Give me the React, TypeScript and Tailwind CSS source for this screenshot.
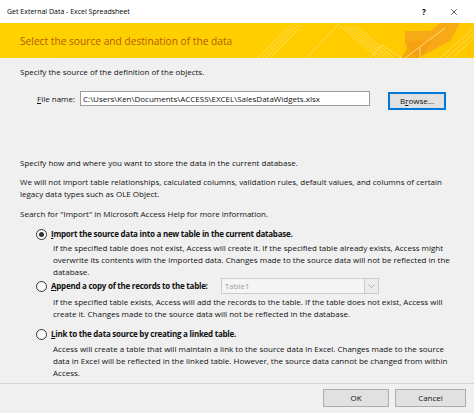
import { X } from 'lucide-react';

function Radio({ checked }: { checked?: boolean }) {
  return (
    <span className="flex h-[11px] w-[11px] shrink-0 items-center justify-center rounded-full border border-[#333] bg-white">
      {checked && <span className="h-[5px] w-[5px] rounded-full bg-[#333]" />}
    </span>
  );
}

function BannerArt() {
  // decorative stripes on the right side of the yellow header
  return (
    <svg className="absolute inset-0 h-full w-full" viewBox="0 0 474 35" preserveAspectRatio="none">
      <defs>
        <linearGradient id="bg" x1="0" x2="1" y1="0" y2="0">
          <stop offset="0" stopColor="#ffd200" />
          <stop offset="0.6" stopColor="#ffce00" />
          <stop offset="1" stopColor="#ffc800" />
        </linearGradient>
      </defs>
      <rect width="474" height="35" fill="url(#bg)" />
      <g stroke="#ffe9a0" strokeWidth="0.7" fill="none" opacity="0.8">
        <path d="M258 35 L290 2" />
        <path d="M262 35 L294 2" />
        <path d="M266 35 L298 2" />
        <path d="M270 35 L302 2" />
        <path d="M306 35 L340 0" />
        <path d="M340 3 L378 35" />
        <path d="M344 3 L382 35" />
        <path d="M348 3 L386 35" />
        <path d="M352 3 L390 35" />
        <path d="M356 3 L394 35" />
        <path d="M370 35 L382 22 L402 35" />
        <path d="M440 35 L474 5" />
        <path d="M446 35 L474 10" />
        <path d="M452 35 L474 15" />
      </g>
      <polygon points="405,8 430,8 440,0 460,0 450,18 418,35 405,22" fill="#f7a51a" opacity="0.85" />
      <polygon points="410,18 432,18 420,35 402,35" fill="#f39a10" opacity="0.7" />
      <path d="M405 35 L445 5" stroke="#ffe9a0" strokeWidth="0.8" />
      <path d="M420 25 L420 35" stroke="#ffe9a0" strokeWidth="0.8" />
    </svg>
  );
}

export default function App() {
  return (
    <div
      className="flex h-[413px] w-[474px] flex-col overflow-hidden bg-[#f0f0f0] text-[8px] leading-[12px] text-[#111]"
      style={{ fontFamily: '"Open Sans", "Noto Sans", sans-serif' }}
    >
      {/* Title bar */}
      <div className="flex h-[23px] shrink-0 items-center bg-white pl-[7px] text-[7px] text-black">
        <span className="flex-1">Get External Data - Excel Spreadsheet</span>
        <span className="w-[20px] text-center text-[8px] font-bold">?</span>
        <span className="flex w-[40px] items-center justify-center">
          <X className="h-[10px] w-[10px]" strokeWidth={1.5} />
        </span>
      </div>

      {/* Yellow banner */}
      <div className="relative flex h-[35px] shrink-0 items-center pl-[20px]">
        <BannerArt />
        <span className="relative text-[10.2px] text-[#b65a00]">Select the source and destination of the data</span>
      </div>

      {/* Body */}
      <div className="flex flex-1 flex-col pl-[20px] pr-[18px] pt-[8px]">
        <p>Specify the source of the definition of the objects.</p>

        <div className="mt-[13px] flex items-start pl-[17px]">
          <span className="w-[43px] leading-[15px]">
            <span className="underline">F</span>ile name:
          </span>
          <div className="flex h-[15px] w-[290px] items-center border border-[#9c9c9c] bg-white px-[2px]">
            C:\Users\Ken\Documents\ACCESS\EXCEL\SalesDataWidgets.xlsx
          </div>
          <button className="ml-[18px] mt-[1px] flex h-[18px] w-[58px] items-center justify-center border border-[#0078d7] bg-[#e1e1e1] shadow-[inset_0_0_0_1px_#0078d7]">
            B<span className="underline">r</span>owse...
          </button>
        </div>

        <p className="mt-[47px]">Specify how and where you want to store the data in the current database.</p>
        <p className="mt-[7px]">
          We will not import table relationships, calculated columns, validation rules, default values, and columns of certain legacy data types such as OLE Object.
        </p>
        <p className="mt-[8px]">Search for "Import" in Microsoft Access Help for more information.</p>

        <div className="mt-[8px] pl-[16px]">
          <div className="flex items-center gap-[4px]">
            <Radio checked />
            <span className="font-bold tracking-[-0.25px]">
              <span className="underline">I</span>mport the source data into a new table in the current database.
            </span>
          </div>
          <p className="mt-[2px] pl-[17px]">
            If the specified table does not exist, Access will create it. If the specified table already exists, Access might overwrite its contents with the imported data. Changes made to the source data will not be reflected in the database.
          </p>

          <div className="flex h-[16px] items-center gap-[4px]">
            <Radio />
            <span className="font-bold tracking-[-0.25px]">
              <span className="underline">A</span>ppend a copy of the records to the table:
            </span>
            <div className="ml-[9px] flex h-[16px] w-[158px] items-center border border-[#cccccc] bg-[#f5f5f5] text-[#a0a0a0]">
              <span className="flex-1 pl-[3px]">Table1</span>
              <span className="flex h-full w-[14px] items-center justify-center border-l border-[#cccccc] bg-[#ececec]">
                <svg width="7" height="4" viewBox="0 0 7 4">
                  <path d="M0.5 0.5 L3.5 3.5 L6.5 0.5" stroke="#b0b0b0" fill="none" />
                </svg>
              </span>
            </div>
          </div>
          <p className="mt-[2px] pl-[17px]">
            If the specified table exists, Access will add the records to the table. If the table does not exist, Access will create it. Changes made to the source data will not be reflected in the database.
          </p>

          <div className="mt-[8px] flex items-center gap-[4px]">
            <Radio />
            <span className="font-bold tracking-[-0.25px]">
              <span className="underline">L</span>ink to the data source by creating a linked table.
            </span>
          </div>
          <p className="mt-[3px] pl-[17px]">
            Access will create a table that will maintain a link to the source data in Excel. Changes made to the source data in Excel will be reflected in the linked table. However, the source data cannot be changed from within Access.
          </p>
        </div>
      </div>

      {/* Footer */}
      <div className="h-[30px] shrink-0 border-t border-[#d5d5d5]">
        <div className="flex justify-end gap-[6px] pr-[8px] pt-[5px]">
          <button className="h-[18px] w-[66px] border border-[#adadad] bg-[#e1e1e1]">OK</button>
          <button className="h-[18px] w-[71px] border border-[#adadad] bg-[#e1e1e1]">Cancel</button>
        </div>
      </div>
    </div>
  );
}
